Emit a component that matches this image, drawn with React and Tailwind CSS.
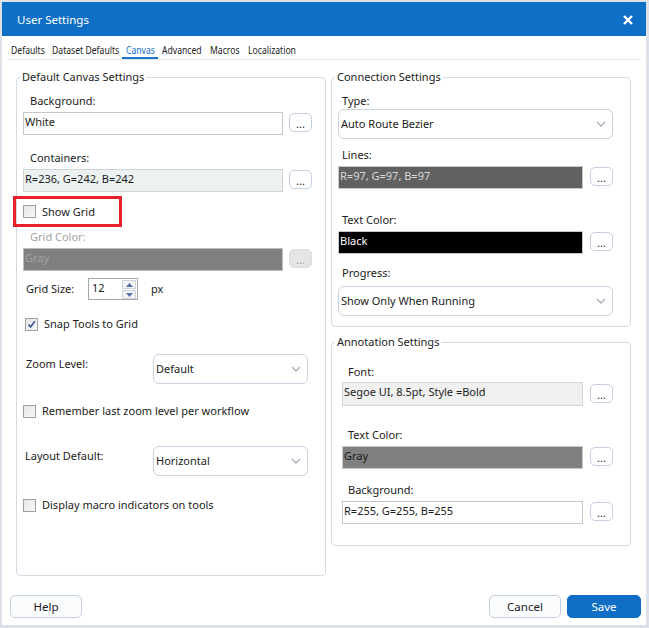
import React from 'react';

const font = { fontFamily: '"Noto Sans", "Open Sans", sans-serif' };

const Label = ({ children, className = '' }) => (
  <div className={`h-4 leading-4 text-[11px] text-[#1b1b1b] whitespace-nowrap ${className}`}>{children}</div>
);

const DotsButton = ({ disabled = false, className = '' }) => (
  <div
    className={`w-[23px] h-[19px] rounded-[5px] border flex items-end justify-center pb-[1px] text-[11px] leading-[12px] ${
      disabled ? 'bg-[#e5e5e5] border-[#dcdcdc] text-[#9a9a9a]' : 'bg-white border-[#c6cfe0] text-[#1b1b1b]'
    } ${className}`}
  >
    ...
  </div>
);

const ColorField = ({ value, width, height = 23, bg, text, border = 'border-[#c8c8c8]', className = '' }) => (
  <div
    className={`border ${border} ${bg} ${text} text-[11px] leading-[16px] pl-[1px] pt-[1px] whitespace-nowrap overflow-hidden ${className}`}
    style={{ width, height }}
  >
    {value}
  </div>
);

const Chevron = () => (
  <svg width="10" height="6" viewBox="0 0 10 6" className="shrink-0">
    <path d="M1 1 L5 5 L9 1" fill="none" stroke="#a3aebf" strokeWidth="1.3" />
  </svg>
);

const Select = ({ value, width }) => (
  <div
    className="h-[30px] rounded-[6px] border border-[#c9d1e0] bg-white flex items-center justify-between pl-[2px] pr-[6px] text-[11px] text-[#1b1b1b]"
    style={{ width }}
  >
    <span>{value}</span>
    <Chevron />
  </div>
);

const CheckBox = ({ checked = false }) => (
  <div className="w-[13px] h-[13px] border border-[#a0a0a0] bg-gradient-to-br from-[#e6e6e6] to-[#f8f8f8] flex items-center justify-center shrink-0">
    {checked && (
      <svg width="9" height="9" viewBox="0 0 9 9">
        <path d="M1.5 4.5 L3.6 7 L7.8 1.2" fill="none" stroke="#3c4f86" strokeWidth="1.6" />
      </svg>
    )}
  </div>
);

const CheckRow = ({ label, checked, className = '' }) => (
  <div className={`flex items-center h-4 gap-[6px] ${className}`}>
    <CheckBox checked={checked} />
    <span className="text-[11px] leading-4 text-[#1b1b1b] whitespace-nowrap">{label}</span>
  </div>
);

const GroupBox = ({ title, className = '', children }) => (
  <fieldset className={`border border-[#d4dbe5] rounded-[4px] px-0 pb-0 ${className}`}>
    <legend className="ml-[3px] px-[2px] text-[11px] leading-4 text-[#1b1b1b]">{title}</legend>
    {children}
  </fieldset>
);

const Spinner = () => (
  <div className="w-[50px] h-[22px] border border-[#a7a7a7] bg-white flex justify-between">
    <span className="text-[11px] leading-[16px] pl-[3px] pt-[1px] text-[#1b1b1b]">12</span>
    <div className="flex flex-col gap-[1px] pt-[1px] pr-[1px]">
      <div className="w-[14px] h-[9px] border border-[#cfd3da] bg-[#f3f4f6] flex items-center justify-center">
        <svg width="7" height="4" viewBox="0 0 7 4"><path d="M0 4 L3.5 0 L7 4 Z" fill="#5a6fa8" /></svg>
      </div>
      <div className="w-[14px] h-[9px] border border-[#cfd3da] bg-[#f3f4f6] flex items-center justify-center">
        <svg width="7" height="4" viewBox="0 0 7 4"><path d="M0 0 L3.5 4 L7 0 Z" fill="#5a6fa8" /></svg>
      </div>
    </div>
  </div>
);

const tabs = [
  { name: 'Defaults', w: 'w-[41px]' },
  { name: 'Dataset Defaults', w: 'w-[74px]' },
  { name: 'Canvas', w: 'w-[36px]' },
  { name: 'Advanced', w: 'w-[48px]' },
  { name: 'Macros', w: 'w-[38px]' },
  { name: 'Localization', w: 'w-[68px]' },
];

export default function App() {
  return (
    <div className="w-[649px] h-[628px] bg-[#dde2e9] pt-[2px] pl-[2px] pr-[3px] pb-[3px]" style={font}>
      <div className="w-full h-full bg-white flex flex-col">
        {/* title bar */}
        <div className="h-[34px] bg-[#0f6fc6] flex items-center justify-between pl-[15px] pr-[13px] pt-[2px] shrink-0">
          <span className="text-white text-[11.5px]">User Settings</span>
          <svg width="10" height="10" viewBox="0 0 10 10">
            <path d="M1 1 L9 9 M9 1 L1 9" stroke="white" strokeWidth="2.4" />
          </svg>
        </div>

        {/* tabs */}
        <div className="ml-[5px] mr-[5px] h-[24px] border-b border-[#dfe4ea] flex items-start shrink-0">
          {tabs.map((t) => (
            <div
              key={t.name}
              className={`${t.w} h-[23px] pt-[6px] pl-[4px] text-[11.5px] leading-4 whitespace-nowrap ${
                t.name === 'Canvas' ? 'text-[#1a72c9] border-b-2 border-[#1a72c9]' : 'text-[#1b1b1b]'
              }`}
            >
              <span className="inline-block origin-left scale-x-[0.75]">{t.name}</span>
            </div>
          ))}
        </div>

        {/* body */}
        <div className="flex mt-[9px] ml-[14px] gap-[5px]">
          <GroupBox title="Default Canvas Settings" className="w-[310px] h-[507px]">
            <Label className="ml-[13px] mt-[8px]">Background:</Label>
            <div className="flex items-start ml-[6px] mt-[3px]">
              <ColorField value="White" width={260} bg="bg-white" text="text-[#1b1b1b]" />
              <DotsButton className="ml-[6px] mt-[1px]" />
            </div>
            <Label className="ml-[13px] mt-[15px]">Containers:</Label>
            <div className="flex items-start ml-[6px] mt-[3px]">
              <ColorField value="R=236, G=242, B=242" width={260} bg="bg-[#ecf2f2]" text="text-[#1b1b1b]" border="border-[#d0d4d4]" />
              <DotsButton className="ml-[6px] mt-[1px]" />
            </div>
            <div className="ml-[-4px] mt-[4px] w-[109px] h-[31px] border-[3px] border-[#e6212a] flex items-center pl-[7px]">
              <CheckRow label="Show Grid" />
            </div>
            <Label className="ml-[13px] mt-[2px] !text-[#a3a3a3]">Grid Color:</Label>
            <div className="flex items-start ml-[6px] mt-[3px]">
              <ColorField value="Gray" width={260} bg="bg-[#808080]" text="text-[#a2a2a2]" border="border-[#bdbdbd]" />
              <DotsButton disabled className="ml-[6px] mt-[1px]" />
            </div>
            <div className="flex items-center ml-[9px] mt-[7px] h-[22px]">
              <Label className="w-[62px]">Grid Size:</Label>
              <Spinner />
              <span className="ml-[13px] text-[11px] text-[#1b1b1b]">px</span>
            </div>
            <CheckRow label="Snap Tools to Grid" checked className="ml-[8px] mt-[16px]" />
            <div className="flex items-start ml-[9px] mt-[22px]">
              <Label className="w-[127px] mt-[2px]">Zoom Level:</Label>
              <Select value="Default" width={155} />
            </div>
            <CheckRow label="Remember last zoom level per workflow" className="ml-[6px] mt-[19px]" />
            <div className="flex items-start ml-[8px] mt-[27px]">
              <Label className="w-[128px] mt-[2px]">Layout Default:</Label>
              <Select value="Horizontal" width={155} />
            </div>
            <CheckRow label="Display macro indicators on tools" className="ml-[6px] mt-[21px]" />
          </GroupBox>

          <div className="flex flex-col">
            <GroupBox title="Connection Settings" className="w-[300px] h-[258px]">
              <Label className="ml-[10px] mt-[8px]">Type:</Label>
              <div className="ml-[6px]">
                <Select value="Auto Route Bezier" width={275} />
              </div>
              <Label className="ml-[10px] mt-[8px]">Lines:</Label>
              <div className="flex items-start ml-[6px] mt-[3px]">
                <ColorField value="R=97, G=97, B=97" width={245} bg="bg-[#616161]" text="text-[#d8d8d8]" border="border-[#c8c8c8]" />
                <DotsButton className="ml-[7px] mt-[1px]" />
              </div>
              <Label className="ml-[10px] mt-[23px]">Text Color:</Label>
              <div className="flex items-start ml-[6px] mt-[3px]">
                <ColorField value="Black" width={245} bg="bg-black" text="text-white" border="border-[#c8c8c8]" />
                <DotsButton className="ml-[7px] mt-[1px]" />
              </div>
              <Label className="ml-[10px] mt-[11px]">Progress:</Label>
              <div className="ml-[6px] mt-[5px]">
                <Select value="Show Only When Running" width={275} />
              </div>
            </GroupBox>

            <GroupBox title="Annotation Settings" className="w-[300px] h-[212px] mt-[7px]">
              <Label className="ml-[16px] mt-[14px]">Font:</Label>
              <div className="flex items-start ml-[10px] mt-[2px]">
                <ColorField value="Segoe UI, 8.5pt, Style =Bold" width={241} height={24} bg="bg-[#f0f0f0]" text="text-[#1b1b1b]" border="border-[#d6d6d6]" />
                <DotsButton className="ml-[7px] mt-[2px]" />
              </div>
              <Label className="ml-[16px] mt-[21px]">Text Color:</Label>
              <div className="flex items-start ml-[10px] mt-[3px]">
                <ColorField value="Gray" width={241} bg="bg-[#808080]" text="text-[#1b1b1b]" border="border-[#c8c8c8]" />
                <DotsButton className="ml-[7px] mt-[1px]" />
              </div>
              <Label className="ml-[16px] mt-[13px]">Background:</Label>
              <div className="flex items-start ml-[10px] mt-[3px]">
                <ColorField value="R=255, G=255, B=255" width={241} bg="bg-white" text="text-[#1b1b1b]" border="border-[#c8c8c8]" />
                <DotsButton className="ml-[7px] mt-[1px]" />
              </div>
            </GroupBox>
          </div>
        </div>

        {/* footer */}
        <div className="flex items-center justify-between mt-[19px] ml-[8px] mr-[5px]">
          <button className="w-[72px] h-[23px] rounded-[5px] border border-[#c6cfe0] bg-[#fbfcfd] text-[11.5px] text-[#1b1b1b]">Help</button>
          <div className="flex gap-[6px]">
            <button className="w-[72px] h-[23px] rounded-[5px] border border-[#c6cfe0] bg-[#fbfcfd] text-[11.5px] text-[#1b1b1b]">Cancel</button>
            <button className="w-[74px] h-[23px] rounded-[5px] border border-[#0e6cc4] bg-[#0f6fc6] text-[11.5px] text-white">Save</button>
          </div>
        </div>
      </div>
    </div>
  );
}
